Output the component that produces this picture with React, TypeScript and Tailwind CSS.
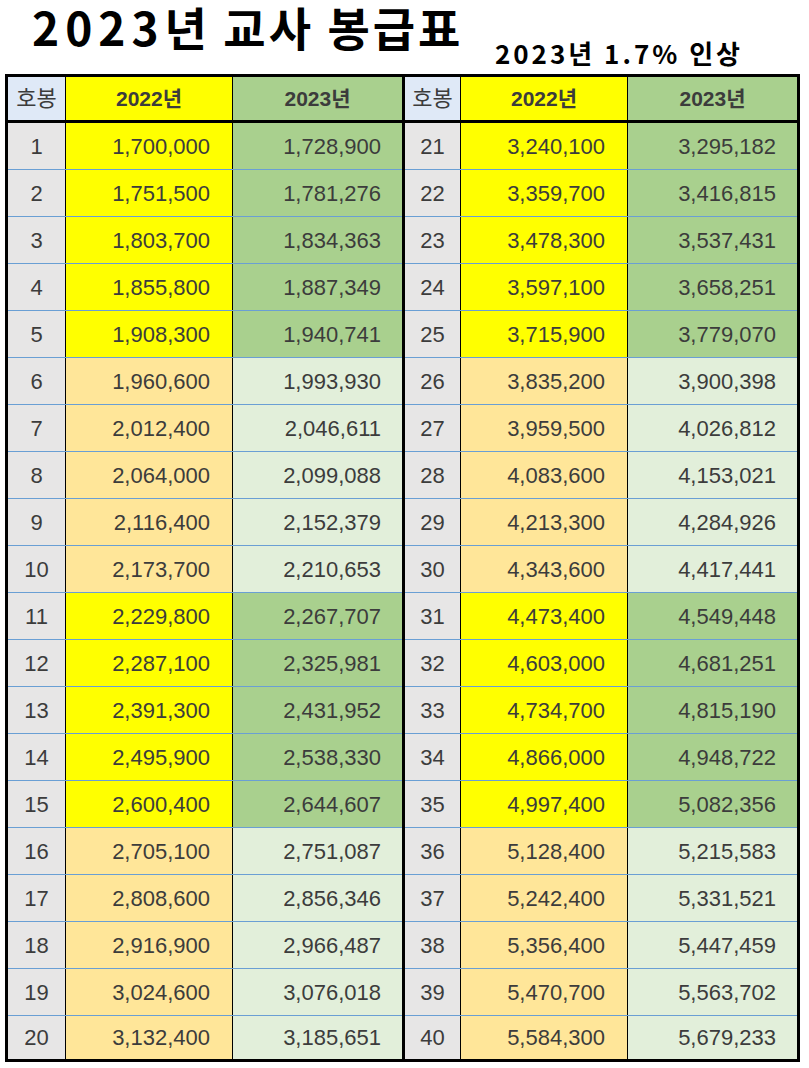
import React from 'react';

const left2022 = [
  '1,700,000', '1,751,500', '1,803,700', '1,855,800', '1,908,300',
  '1,960,600', '2,012,400', '2,064,000', '2,116,400', '2,173,700',
  '2,229,800', '2,287,100', '2,391,300', '2,495,900', '2,600,400',
  '2,705,100', '2,808,600', '2,916,900', '3,024,600', '3,132,400',
];
const left2023 = [
  '1,728,900', '1,781,276', '1,834,363', '1,887,349', '1,940,741',
  '1,993,930', '2,046,611', '2,099,088', '2,152,379', '2,210,653',
  '2,267,707', '2,325,981', '2,431,952', '2,538,330', '2,644,607',
  '2,751,087', '2,856,346', '2,966,487', '3,076,018', '3,185,651',
];
const right2022 = [
  '3,240,100', '3,359,700', '3,478,300', '3,597,100', '3,715,900',
  '3,835,200', '3,959,500', '4,083,600', '4,213,300', '4,343,600',
  '4,473,400', '4,603,000', '4,734,700', '4,866,000', '4,997,400',
  '5,128,400', '5,242,400', '5,356,400', '5,470,700', '5,584,300',
];
const right2023 = [
  '3,295,182', '3,416,815', '3,537,431', '3,658,251', '3,779,070',
  '3,900,398', '4,026,812', '4,153,021', '4,284,926', '4,417,441',
  '4,549,448', '4,681,251', '4,815,190', '4,948,722', '5,082,356',
  '5,215,583', '5,331,521', '5,447,459', '5,563,702', '5,679,233',
];

// rows 1-5 / 11-15 are the bright band, 6-10 / 16-20 the pale band
const bright = (i: number) => Math.floor(i / 5) % 2 === 0;

const Half = ({
  start,
  a,
  b,
  stepW,
  last,
}: {
  start: number;
  a: string[];
  b: string[];
  stepW: string;
  last?: boolean;
}) => (
  <div className={last ? 'flex flex-col' : 'flex flex-col border-r-[3px] border-black'}>
    {/* header */}
    <div className="flex h-[46px] border-b-[3px] border-black">
      <div className={`${stepW} flex items-center justify-center border-r border-black bg-[#dfe9f7] text-[22px] text-[#3c3c3c]`}>
        호봉
      </div>
      <div className="w-[167px] flex items-center justify-center border-r border-black bg-[#ffff00] text-[21px] font-bold text-[#3c3c3c]">
        2022년
      </div>
      <div className="w-[169px] flex items-center justify-center bg-[#a9d08e] text-[21px] font-bold text-[#3c3c3c]">
        2023년
      </div>
    </div>
    {a.map((v, i) => {
      const isLast = i === a.length - 1;
      const hi = bright(i);
      return (
        <div
          key={i}
          className={isLast ? 'flex h-[43px]' : 'flex h-[47px] border-b border-[#6a9fd4]'}
        >
          <div className={`${stepW} flex items-center justify-center border-r border-black bg-[#e7e6e6]`}>
            {start + i}
          </div>
          <div
            className={`w-[167px] flex items-center justify-end pr-[22px] border-r border-black ${
              hi ? 'bg-[#ffff00]' : 'bg-[#ffe699]'
            }`}
          >
            {v}
          </div>
          <div
            className={`w-[169px] flex items-center justify-end pr-[21px] ${
              hi ? 'bg-[#a9d08e]' : 'bg-[#e2efda]'
            }`}
          >
            {b[i]}
          </div>
        </div>
      );
    })}
  </div>
);

export default function App() {
  return (
    <div
      className="w-[809px] h-[1068px] bg-white text-[#3c3c3c]"
      style={{ fontFamily: '"Liberation Sans", "Noto Sans CJK KR", sans-serif' }}
    >
      <div className="flex h-[74px]">
        <div
          className="pl-[32px] pt-[2px] text-[46px] font-bold leading-[1.05] text-black tracking-[3px] whitespace-nowrap"
          style={{ fontFamily: '"Noto Sans CJK KR", sans-serif' }}
        >
          <span className="tracking-[6px]">2023</span>년 교사 봉급표
        </div>
        <div
          className="ml-auto mr-[66px] self-end mb-[8px] text-[26px] font-bold leading-none text-black tracking-[3px] whitespace-nowrap"
          style={{ fontFamily: '"Noto Sans CJK KR", sans-serif' }}
        >
          2023년 1.7% 인상
        </div>
      </div>
      <div className="ml-[5px] w-[795px] flex border-[3px] border-black text-[22px]">
        <Half start={1} a={left2022} b={left2023} stepW="w-[58px]" />
        <Half start={21} a={right2022} b={right2023} stepW="w-[56px]" last />
      </div>
    </div>
  );
}
